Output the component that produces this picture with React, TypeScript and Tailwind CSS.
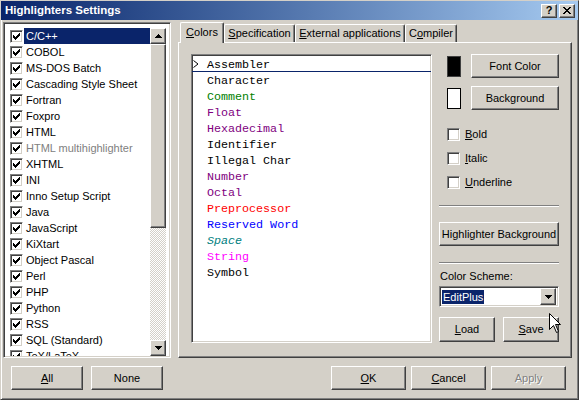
import React from 'react';

const raised =
  'bg-[#d4d0c8] border border-t-white border-l-white border-r-[#404040] border-b-[#404040] shadow-[inset_-1px_-1px_#808080]';
const sunken =
  'border border-t-[#808080] border-l-[#808080] border-r-white border-b-white shadow-[inset_1px_1px_#404040,inset_-1px_-1px_#d4d0c8]';

interface LangItem {
  name: string;
  selected?: boolean;
  gray?: boolean;
}

const languages: LangItem[] = [
  { name: 'C/C++', selected: true },
  { name: 'COBOL' },
  { name: 'MS-DOS Batch' },
  { name: 'Cascading Style Sheet' },
  { name: 'Fortran' },
  { name: 'Foxpro' },
  { name: 'HTML' },
  { name: 'HTML multihighlighter', gray: true },
  { name: 'XHTML' },
  { name: 'INI' },
  { name: 'Inno Setup Script' },
  { name: 'Java' },
  { name: 'JavaScript' },
  { name: 'KiXtart' },
  { name: 'Object Pascal' },
  { name: 'Perl' },
  { name: 'PHP' },
  { name: 'Python' },
  { name: 'RSS' },
  { name: 'SQL (Standard)' },
  { name: 'TeX/LaTeX' },
];

const elements = [
  { name: 'Assembler', cls: 'text-black' },
  { name: 'Character', cls: 'text-black' },
  { name: 'Comment', cls: 'text-[#008000]' },
  { name: 'Float', cls: 'text-[#800080]' },
  { name: 'Hexadecimal', cls: 'text-[#800080]' },
  { name: 'Identifier', cls: 'text-black' },
  { name: 'Illegal Char', cls: 'text-black' },
  { name: 'Number', cls: 'text-[#800080]' },
  { name: 'Octal', cls: 'text-[#800080]' },
  { name: 'Preprocessor', cls: 'text-[#ff0000]' },
  { name: 'Reserved Word', cls: 'text-[#0000ff]' },
  { name: 'Space', cls: 'text-[#008080] italic' },
  { name: 'String', cls: 'text-[#ff00ff]' },
  { name: 'Symbol', cls: 'text-black' },
];

const CheckMark = () => (
  <svg width="7" height="7" viewBox="0 0 7 7" shapeRendering="crispEdges">
    <path
      d="M0 2h1v3H0z M1 3h1v3H1z M2 4h1v3H2z M3 3h1v3H3z M4 2h1v3H4z M5 1h1v3H5z M6 0h1v3H6z"
      fill="#000"
    />
  </svg>
);

const CheckBox = ({ checked }: { checked?: boolean }) => (
  <div className={`w-[13px] h-[13px] shrink-0 bg-white flex items-center justify-center ${sunken}`}>
    {checked && <CheckMark />}
  </div>
);

const Arrow = ({ down }: { down?: boolean }) => (
  <svg width="7" height="4" viewBox="0 0 7 4" shapeRendering="crispEdges">
    {down ? (
      <path d="M0 0h7v1H0z M1 1h5v1H1z M2 2h3v1H2z M3 3h1v1H3z" fill="#000" />
    ) : (
      <path d="M3 0h1v1H3z M2 1h3v1H2z M1 2h5v1H1z M0 3h7v1H0z" fill="#000" />
    )}
  </svg>
);

const Button = ({
  className,
  children,
  disabled,
}: {
  className: string;
  children: React.ReactNode;
  disabled?: boolean;
}) => (
  <div
    className={`${raised} ${className} flex items-center justify-center leading-none ${
      disabled ? 'text-[#808080] [text-shadow:1px_1px_#fff]' : 'text-black'
    }`}
  >
    {children}
  </div>
);

const Separator = ({ className }: { className: string }) => (
  <div className={`h-[2px] border-t border-t-[#808080] border-b border-b-white ${className}`} />
);

const Tab = ({ children, selected, className }: { children: React.ReactNode; selected?: boolean; className: string }) => (
  <div
    className={`${className} bg-[#d4d0c8] border-t border-l border-t-white border-l-white border-r border-r-[#404040] shadow-[inset_-1px_0_#808080] rounded-t-[2px] flex items-center justify-center ${
      selected ? 'h-[21px] -mb-[1px] relative z-10 pb-[2px]' : 'h-[18px]'
    }`}
  >
    {children}
  </div>
);

export default function App() {
  return (
    <div className="w-[579px] h-[400px] bg-[#d4d0c8] border border-t-[#d4d0c8] border-l-[#d4d0c8] border-r-[#404040] border-b-[#404040] shadow-[inset_1px_1px_#fff,inset_-1px_-1px_#808080] flex flex-col relative overflow-hidden font-['Liberation_Sans',Arial,sans-serif] text-[11px] text-black select-none">
      {/* title bar */}
      <div className="h-[19px] shrink-0 flex items-center justify-between pl-[4px] pr-[3px] bg-linear-to-r from-[#0a246a] to-[#a6caf0]">
        <span className="text-white font-bold text-[11.5px] leading-none">Highlighters Settings</span>
        <div className="flex gap-[2px]">
          <div className={`${raised} w-[16px] h-[14px] flex items-center justify-center font-bold text-[11px] leading-none`}>?</div>
          <div className={`${raised} w-[16px] h-[14px] flex items-center justify-center`}>
            <svg width="8" height="7" viewBox="0 0 8 7" shapeRendering="crispEdges">
              <path
                d="M0 0h2v1H0z M6 0h2v1H6z M1 1h2v1H1z M5 1h2v1H5z M2 2h4v1H2z M3 3h2v1H3z M2 4h4v1H2z M1 5h2v1H1z M5 5h2v1H5z M0 6h2v1H0z M6 6h2v1H6z"
                fill="#000"
              />
            </svg>
          </div>
        </div>
      </div>

      {/* body */}
      <div className="flex px-[2px] pt-[2px]">
        {/* left column */}
        <div className="w-[168px] flex flex-col">
          <div className={`h-[336px] bg-white flex pt-[5px] pr-[4px] pb-[1px] ${sunken}`}>
            <div className="flex-1 flex flex-col overflow-hidden">
              {languages.map((l) => (
                <div key={l.name} className="h-[16px] shrink-0 flex items-center">
                  <div className="ml-[6px] mr-[1px]">
                    <CheckBox checked />
                  </div>
                  <div
                    className={`flex-1 h-[16px] pl-[2px] leading-[16px] whitespace-nowrap ${
                      l.selected ? 'bg-[#0a246a] text-white' : l.gray ? 'text-[#808080]' : 'text-black'
                    }`}
                  >
                    {l.name}
                  </div>
                </div>
              ))}
            </div>
            <div className="w-[16px] flex flex-col">
              <div className={`${raised} h-[16px] flex items-center justify-center`}>
                <Arrow />
              </div>
              <div className={`${raised} h-[184px]`} />
              <div className="flex-1 bg-[repeating-conic-gradient(#d4d0c8_0%_25%,#ffffff_0%_50%)] bg-[length:2px_2px]" />
              <div className={`${raised} h-[16px] flex items-center justify-center`}>
                <Arrow down />
              </div>
            </div>
          </div>
          <div className="flex gap-[8px] pl-[8px] mt-[8px]">
            <Button className="w-[72px] h-[24px]">
              <u>A</u>ll
            </Button>
            <Button className="w-[72px] h-[24px]">None</Button>
          </div>
        </div>

        {/* right column */}
        <div className="ml-[7px] w-[394px] flex flex-col">
          <div className="h-[20px] flex items-end pl-[2px]">
            <Tab selected className="w-[44px]">
              <span>
                <u>C</u>olors
              </span>
            </Tab>
            <Tab className="w-[71px]">
              <span>
                <u>S</u>pecification
              </span>
            </Tab>
            <Tab className="w-[110px]">
              <span>
                <u>E</u>xternal applications
              </span>
            </Tab>
            <Tab className="w-[52px]">
              <span>
                C<u>o</u>mpiler
              </span>
            </Tab>
          </div>
          <div className={`${raised} h-[316px] flex pl-[12px] pt-[11px]`}>
            {/* element list */}
            <div className={`w-[241px] h-[289px] pt-[1px] bg-white flex flex-col font-['Liberation_Mono','Courier_New',monospace] text-[11.7px] ${sunken}`}>
              {elements.map((e, i) => (
                <div
                  key={e.name}
                  className={`h-[16px] shrink-0 flex items-center ${i === 0 ? 'shadow-[inset_0_-1px_#0a246a]' : ''}`}
                >
                  <div className="w-[15px] h-[16px] flex items-center">
                    {i === 0 && (
                      <svg width="6" height="8" viewBox="0 0 6 8" className="ml-[1px]">
                        <path d="M0.5 0.5 L5 4 L0.5 7.5" fill="none" stroke="#000" strokeWidth="1" />
                      </svg>
                    )}
                  </div>
                  <span className={`leading-[16px] pt-[1px] whitespace-pre ${e.cls}`}>{e.name}</span>
                </div>
              ))}
            </div>

            {/* controls */}
            <div className="ml-[7px] w-[120px] flex flex-col">
              <div className="h-[24px] flex items-center">
                <div className="ml-[8px] w-[14px] h-[21px] bg-black border border-[#404040]" />
                <Button className="ml-[10px] w-[88px] h-[24px]">Font Color</Button>
              </div>
              <div className="h-[24px] mt-[8px] flex items-center">
                <div className="ml-[8px] w-[14px] h-[21px] bg-white border border-black" />
                <Button className="ml-[10px] w-[88px] h-[24px]">Background</Button>
              </div>
              <div className="mt-[12px] flex flex-col">
                <div className="h-[24px] flex items-center pl-[8px]">
                  <CheckBox />
                  <span className="ml-[5px]">
                    <u>B</u>old
                  </span>
                </div>
                <div className="h-[24px] flex items-center pl-[8px]">
                  <CheckBox />
                  <span className="ml-[5px]">
                    <u>I</u>talic
                  </span>
                </div>
                <div className="h-[24px] flex items-center pl-[8px]">
                  <CheckBox />
                  <span className="ml-[5px]">
                    <u>U</u>nderline
                  </span>
                </div>
              </div>
              <Separator className="mt-[11px]" />
              <Button className="mt-[15px] w-[120px] h-[24px]">Highlighter Background</Button>
              <Separator className="mt-[16px]" />
              <div className="mt-[5px] h-[14px] leading-[14px] pl-[1px]">Color Scheme:</div>
              <div className={`mt-[3px] h-[21px] bg-white flex items-center pl-[2px] pr-[2px] ${sunken}`}>
                <span className="bg-[#0a246a] text-white px-[1px] leading-[14px]">EditPlus</span>
                <div className="flex-1" />
                <div className={`${raised} w-[16px] h-[17px] flex items-center justify-center`}>
                  <Arrow down />
                </div>
              </div>
              <div className="mt-[10px] flex gap-[8px]">
                <Button className="w-[56px] h-[25px]">
                  <u>L</u>oad
                </Button>
                <Button className="w-[56px] h-[25px]">
                  <u>S</u>ave
                </Button>
              </div>
            </div>
          </div>
          <div className="mt-[8px] flex justify-end gap-[5px] pr-[6px]">
            <Button className="w-[75px] h-[24px]">
              <u>O</u>K
            </Button>
            <Button className="w-[75px] h-[24px]">
              <u>C</u>ancel
            </Button>
            <Button disabled className="w-[75px] h-[24px]">
              Apply
            </Button>
          </div>
        </div>
      </div>

      {/* mouse pointer */}
      <svg
        className="absolute left-[548px] top-[312px] pointer-events-none"
        width="13"
        height="21"
        viewBox="0 0 13 21"
      >
        <path d="M0.5 0.5 L0.5 16.5 L4.5 12.5 L7.5 19.5 L9.5 18.5 L6.5 11.5 L11.5 11.5 Z" fill="#fff" stroke="#000" strokeWidth="1" />
      </svg>
    </div>
  );
}
